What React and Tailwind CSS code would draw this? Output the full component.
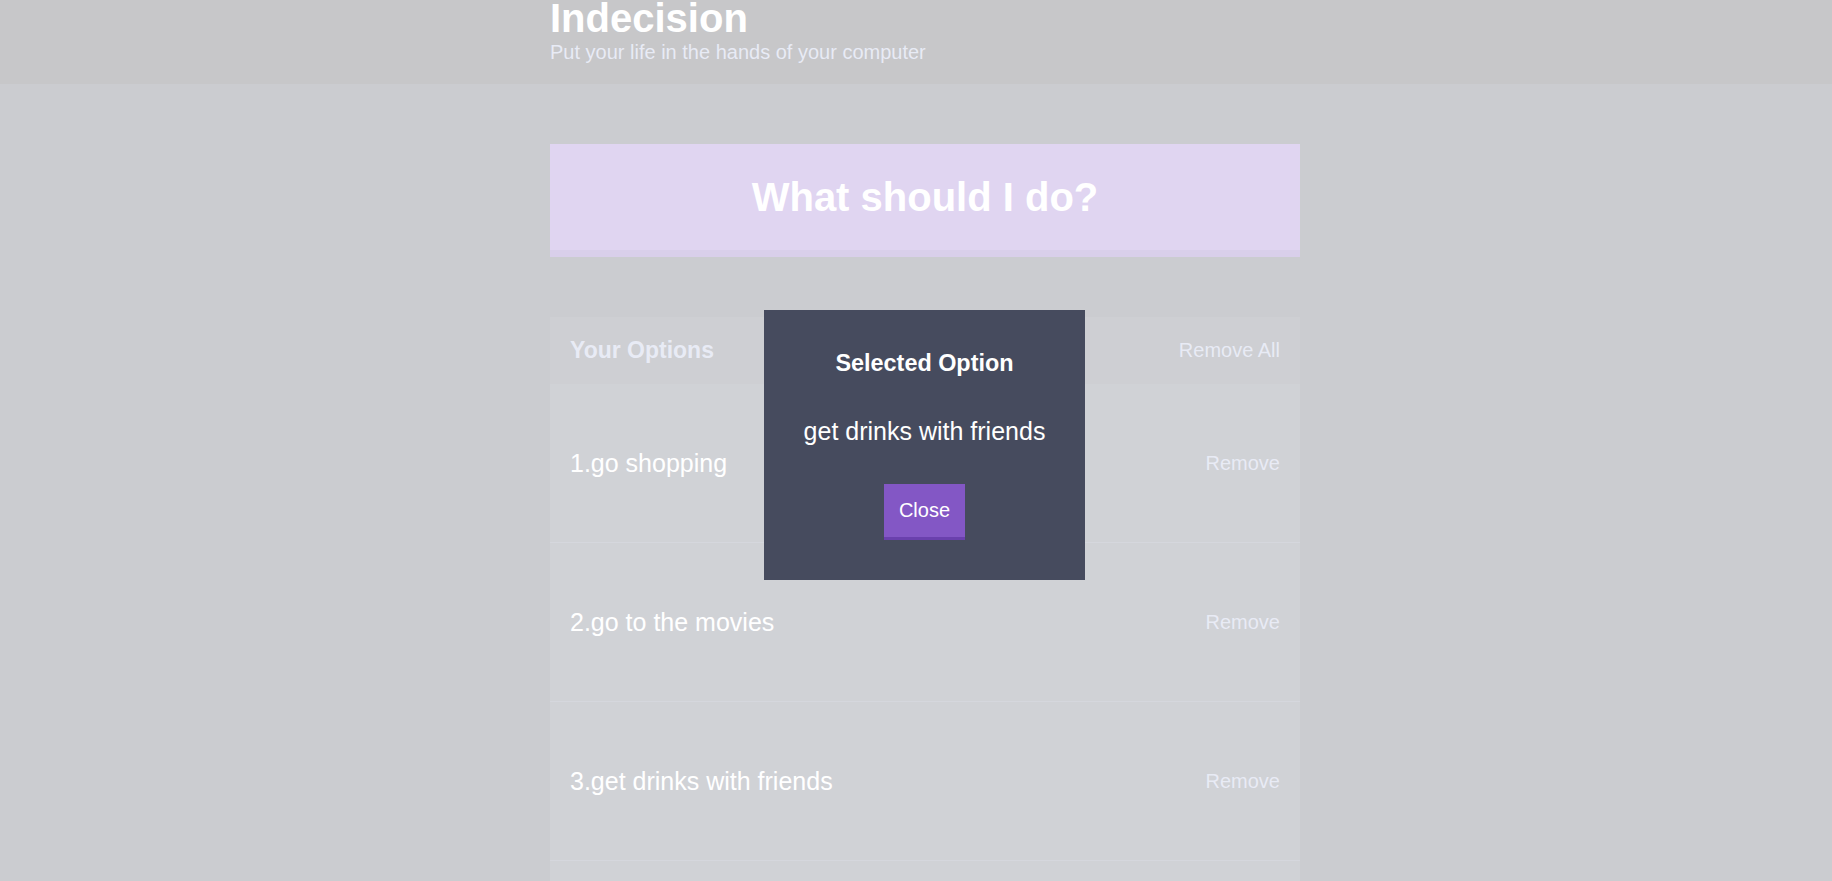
import React from "react";

const options = ["go shopping", "go to the movies", "get drinks with friends"];

export default function App() {
  return (
    <div className="relative min-h-screen bg-[#333745] font-['Liberation_Sans',Arial,sans-serif]">
      <header className="h-[84px] bg-[#20222b]">
        <div className="ml-[550px] w-[750px]">
          <h1 className="m-0 text-[40px] leading-[36px] font-bold text-white">Indecision</h1>
          <h2 className="mt-[5px] text-[20px] leading-[23px] font-normal text-[#a5afd7]">
            Put your life in the hands of your computer
          </h2>
        </div>
      </header>

      <main className="ml-[550px] w-[750px] pt-[60px]">
        <button className="block w-full bg-[#8357c5] border-b-[7px] border-[#6a40ad] py-[30px] text-[40px] leading-[46px] font-bold text-white">
          What should I do?
        </button>

        <div className="mt-[60px] bg-[#464b5e]">
          <div className="flex items-center justify-between bg-[#3c4251] px-[20px] py-[20px]">
            <h3 className="text-[23px] leading-[27px] font-bold text-[#a5afd7]">Your Options</h3>
            <button className="text-[20px] leading-[23px] text-[#a5afd7]">Remove All</button>
          </div>
          {options.map((o, i) => (
            <div
              key={o}
              className="flex items-center justify-between border-b border-[#5a6079] px-[20px] py-[40px]"
            >
              <p className="my-[25px] text-[25px] leading-[28px] text-white">
                {i + 1}.{o}
              </p>
              <button className="text-[20px] leading-[23px] text-[#a5afd7]">Remove</button>
            </div>
          ))}
          <div className="h-[100px]" />
        </div>
      </main>

      <div className="fixed inset-0 bg-[rgba(255,255,255,0.75)]" />

      <div className="fixed left-[764px] top-[310px] w-[321px] bg-[#464b5e] px-[20px] py-[40px] text-center text-white">
        <h3 className="mb-[40px] text-[23.4px] leading-[27px] font-bold whitespace-nowrap">Selected Option</h3>
        <p className="mb-[38px] text-[25px] leading-[29px] whitespace-nowrap">get drinks with friends</p>
        <button className="bg-[#8357c5] border-b-[3px] border-[#6a40ad] px-[15px] py-[15px] text-[20px] leading-[23px] text-white">
          Close
        </button>
      </div>
    </div>
  );
}
